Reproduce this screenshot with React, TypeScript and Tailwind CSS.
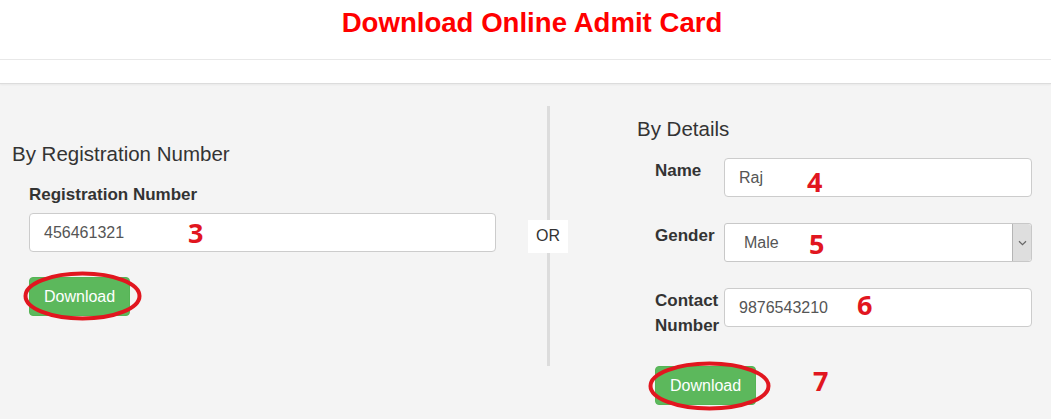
import { ReactNode } from 'react';

function Mark({ children, className }: { children: ReactNode; className: string }) {
  return (
    <span
      className={`absolute font-['Open_Sans',sans-serif] font-bold text-[27px] leading-[27px] text-[#e1161f] ${className}`}
    >
      {children}
    </span>
  );
}

function Ring({ className, w, h }: { className: string; w: number; h: number }) {
  return (
    <svg className={`absolute pointer-events-none ${className}`} width={w} height={h} viewBox={`0 0 ${w} ${h}`}>
      <ellipse cx={w / 2} cy={h / 2} rx={w / 2 - 2.5} ry={h / 2 - 2.5} fill="none" stroke="#e1161f" strokeWidth="4" />
    </svg>
  );
}

function DownloadButton() {
  return (
    <button className="h-[39px] px-[14px] rounded-[4px] bg-[#5cb85c] border border-[#55b455] text-white text-[16px] leading-none">
      Download
    </button>
  );
}

function TextBox({ value, mark, markClass }: { value: string; mark: string; markClass: string }) {
  return (
    <div className="relative flex-1 h-[39px] flex items-center px-[14px] bg-white border border-[#ccc] rounded-[4px] text-[16px] text-[#555]">
      {value}
      <Mark className={markClass}>{mark}</Mark>
    </div>
  );
}

export default function App() {
  return (
    <div className="min-h-[419px] bg-[#f4f4f4] font-['Liberation_Sans',Arial,sans-serif] text-[#333]">
      {/* Header */}
      <div className="bg-white">
        <div className="h-[60px] flex justify-center pl-[13px] border-b border-[#e8e8e8]">
          <h1 className="mt-[7px] text-[27.6px] leading-[32px] font-bold text-[#f00]">Download Online Admit Card</h1>
        </div>
        <div className="h-[24px] border-b border-[#dcdcdc] shadow-[0_1px_2px_rgba(0,0,0,0.05)]" />
      </div>

      <div className="flex">
        {/* By registration number */}
        <div className="w-[528px] pl-[12px] pr-[32px] pt-[58px]">
          <h2 className="text-[20.5px] leading-[24px]">By Registration Number</h2>
          <div className="pl-[17px] mt-[16px]">
            <label className="block text-[17px] leading-[25px] font-bold">Registration Number</label>
            <div className="flex mt-[6px]">
              <TextBox value="456461321" mark="3" markClass="left-[158px] top-[5px]" />
            </div>
            <div className="relative inline-block mt-[25px]">
              <DownloadButton />
              <Ring className="left-[-6px] top-[-6px]" w={119} h={50} />
            </div>
          </div>
        </div>

        {/* OR divider */}
        <div className="w-[40px] h-[260px] mt-[22px] flex flex-col items-center">
          <div className="flex-1 w-[3px] bg-[#dcdcdc]" />
          <div className="w-[40px] h-[33px] bg-white flex items-center justify-center text-[16px]">OR</div>
          <div className="flex-1 w-[3px] bg-[#dcdcdc]" />
        </div>

        {/* By details */}
        <div className="flex-1 pl-[69px] pr-[19px] pt-[33px]">
          <h2 className="text-[20.5px] leading-[24px]">By Details</h2>
          <div className="pl-[18px] mt-[17px] flex flex-col">
            <div className="flex items-start">
              <label className="w-[69px] text-[17px] leading-[25px] font-bold">Name</label>
              <TextBox value="Raj" mark="4" markClass="left-[82px] top-[9px]" />
            </div>
            <div className="flex items-start mt-[26px]">
              <label className="w-[69px] text-[17px] leading-[25px] font-bold">Gender</label>
              <div className="relative flex-1 h-[39px] flex bg-white border border-[#c8c8c8] rounded-[3px] text-[16px] text-[#555]">
                <div className="flex-1 flex items-center pl-[19px]">Male</div>
                <div className="w-[19px] bg-[#dedede] border-l border-[#b5b5b5] rounded-r-[3px] flex items-center justify-center">
                  <svg width="9" height="6" viewBox="0 0 9 6">
                    <path d="M1 1.2 L4.5 4.6 L8 1.2" fill="none" stroke="#666" strokeWidth="1.2" />
                  </svg>
                </div>
                <Mark className="left-[84px] top-[6px]">5</Mark>
              </div>
            </div>
            <div className="flex items-start mt-[26px]">
              <label className="w-[69px] text-[17px] leading-[25px] font-bold">
                Contact
                <br />
                Number
              </label>
              <TextBox value="9876543210" mark="6" markClass="left-[132px] top-[2px]" />
            </div>
            <div className="relative mt-[28px] flex">
              <div className="relative">
                <DownloadButton />
                <Ring className="left-[-7px] top-[-5px]" w={123} h={50} />
              </div>
              <Mark className="left-[158px] top-[1px]">7</Mark>
            </div>
          </div>
        </div>
      </div>
    </div>
  );
}
